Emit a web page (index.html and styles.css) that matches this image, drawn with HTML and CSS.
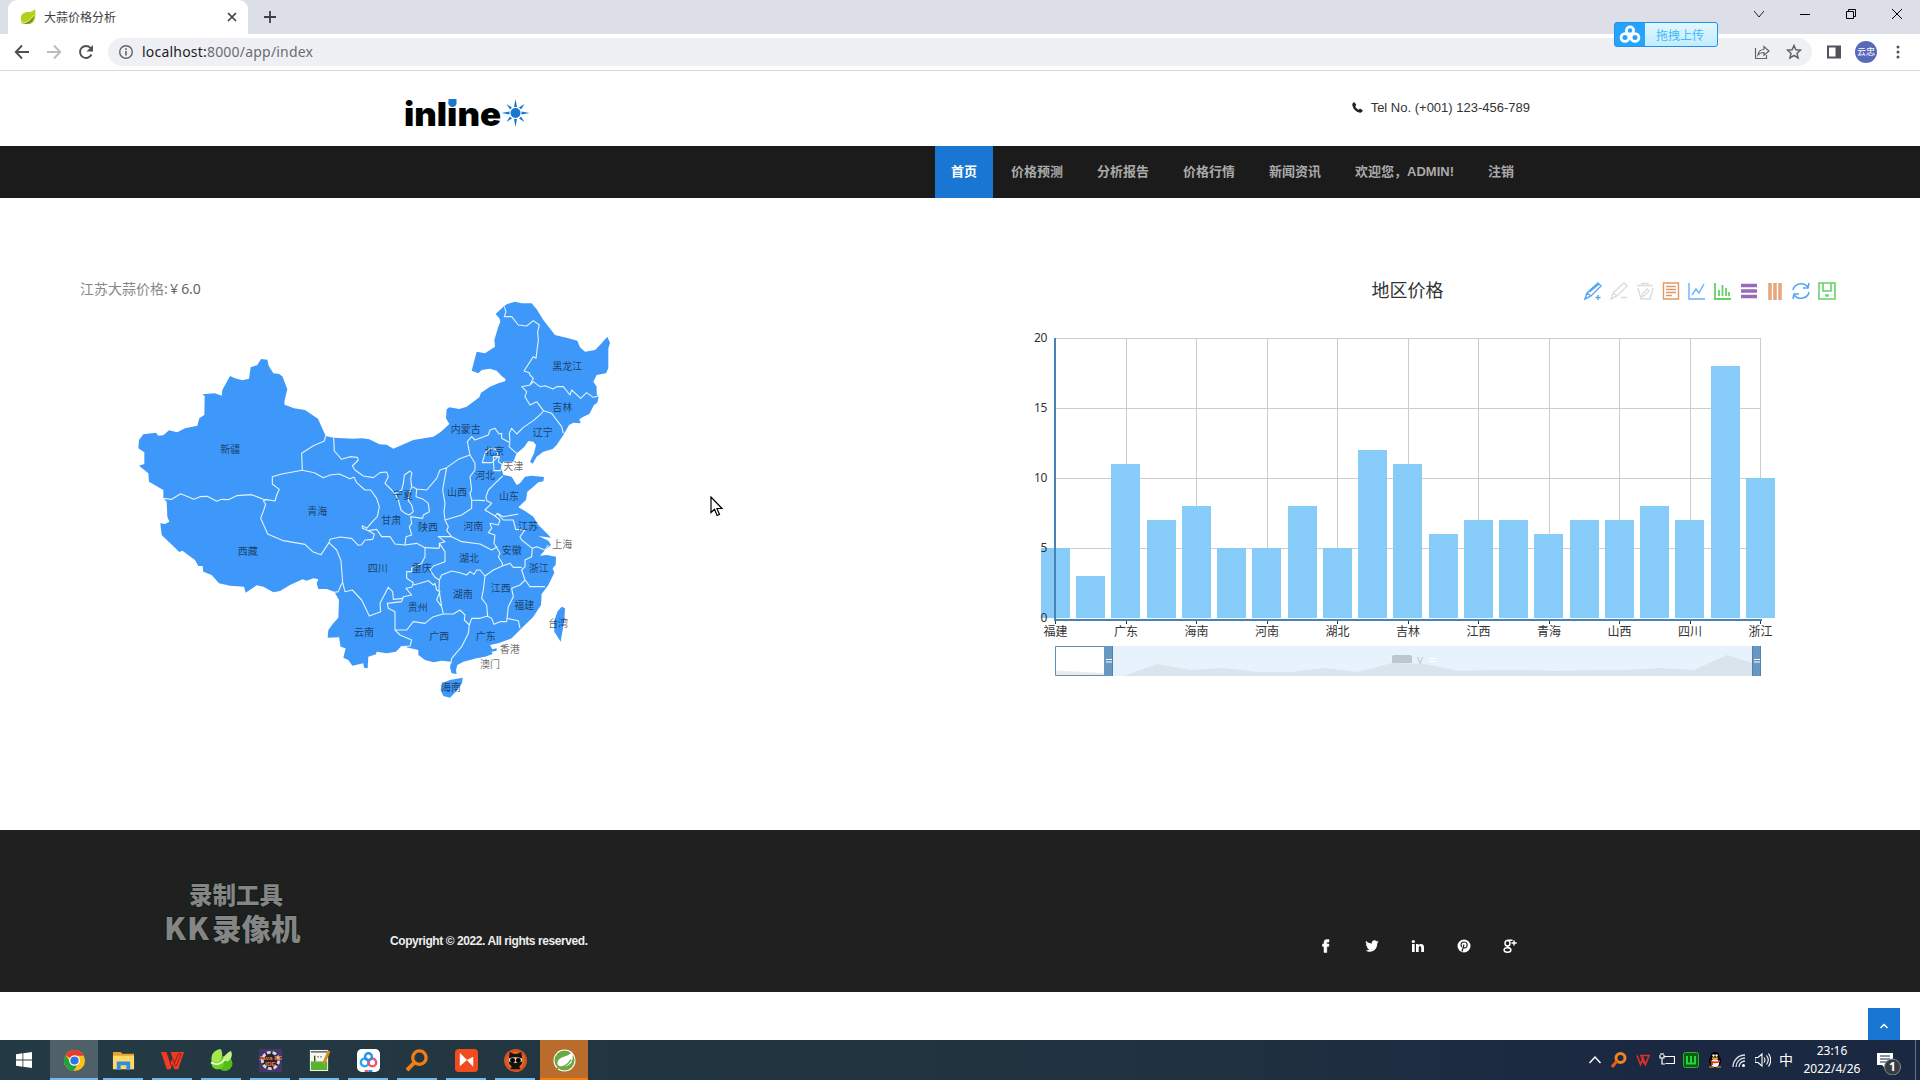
FILE: index.html
```
<!DOCTYPE html>
<html lang="zh-CN">
<head>
<meta charset="utf-8">
<title>大蒜价格分析</title>
<link rel="stylesheet" href="styles.css">
</head>
<body>
<div class="tabbar">
  <div class="tab">
    <svg width="18" height="18" viewBox="0 0 18 18"><path d="M16 1c1 7 1 14-6 15-3 .4-5-.4-6.500-.5C-1 8 4 4 9 4c4 0 5-1 7-3z" fill="#b5cf1f"/><path d="M2 15c7 0 10-3 13-8 0 6-3 9-8 9z" fill="#6e9a20"/><path d="M2 15c6 0 9-3 13-8" stroke="#e9f3a0" fill="none"/></svg>
    <span class="tab-title">大蒜价格分析</span>
    <svg width="12" height="12" viewBox="0 0 12 12"><path d="M2 2l8 8M10 2l-8 8" stroke="#3c4043" stroke-width="1.700"/></svg>
  </div>
  <svg class="newtab" width="14" height="14" viewBox="0 0 14 14"><path d="M7 1v12M1 7h12" stroke="#3c4043" stroke-width="1.800"/></svg>
  <div class="winctl">
    <svg width="12" height="12" viewBox="0 0 12 12"><path d="M1 3l5 6 5-6" fill="none" stroke="#222"/></svg>
    <svg width="12" height="12" viewBox="0 0 12 12"><path d="M1 6.500h10" stroke="#000"/></svg>
    <svg width="12" height="12" viewBox="0 0 12 12"><path d="M1.500 3.500h7v7h-7zM3.500 3.500v-2h7v7h-2" fill="none" stroke="#000"/></svg>
    <svg width="12" height="12" viewBox="0 0 12 12"><path d="M1 1l10 10M11 1L1 11" stroke="#000"/></svg>
  </div>
</div>
<div class="toolbar">
  <svg width="16" height="16" viewBox="0 0 16 16"><path d="M15 8H2M8 1.500L1.800 8 8 14.500" fill="none" stroke="#4d5156" stroke-width="1.900"/></svg>
  <svg width="16" height="16" viewBox="0 0 16 16"><path d="M1 8h13M8 1.500L14.200 8 8 14.500" fill="none" stroke="#babcbe" stroke-width="1.900"/></svg>
  <svg width="16" height="16" viewBox="0 0 16 16"><path d="M13.500 10.500A6 6 0 1 1 12.600 4" fill="none" stroke="#4d5156" stroke-width="1.900"/><path d="M15 1v6.500H8.500z" fill="#4d5156"/></svg>
  <div class="omnibox">
    <svg width="16" height="16" viewBox="0 0 16 16"><circle cx="8" cy="8" r="6.300" fill="none" stroke="#5f6368" stroke-width="1.400"/><path d="M8 7v4.500M8 4.200v1.700" stroke="#5f6368" stroke-width="1.600"/></svg>
    <svg class="url" width="180" height="22"><text x="0" y="16" textLength="171"><tspan fill="#202124">localhost:</tspan><tspan fill="#6a6d71">8000/app/index</tspan></text></svg>
    <svg width="16" height="16" viewBox="0 0 16 16"><path d="M1.500 4v10.500h11V11M4 11c.5-4 3-5.500 6-5.500V2.500L15 7l-5 4.300V8.500c-3 0-4.500.5-6 2.500z" fill="none" stroke="#5f6368" stroke-width="1.200"/></svg>
    <svg width="16" height="16" viewBox="0 0 16 16"><path d="M8 1.500l1.900 4.300 4.600.4-3.500 3.100 1.100 4.700L8 11.500 3.900 14 5 9.300 1.500 6.200l4.600-.4z" fill="none" stroke="#5f6368" stroke-width="1.500"/></svg>
  </div>
  <svg width="16" height="16" viewBox="0 0 16 16"><path d="M2 2.500h12v11H2z" fill="none" stroke="#50545a" stroke-width="2"/><path d="M9.500 2h5v12h-5z" fill="#50545a"/></svg>
  <div class="avatar">云忠</div>
  <svg width="16" height="16" viewBox="0 0 16 16" fill="#50545a"><circle cx="8" cy="3" r="1.500"/><circle cx="8" cy="8" r="1.500"/><circle cx="8" cy="13" r="1.500"/></svg>
</div>
<div class="upload">
  <svg width="30" height="24" viewBox="0 0 30 24" fill="none" stroke="#fff" stroke-width="2.800"><circle cx="15" cy="7.500" r="3.600"/><circle cx="10" cy="14.500" r="3.900"/><circle cx="20" cy="14.500" r="3.900"/></svg>
  <span>拖拽上传</span>
</div>

<header class="site-header">
  <svg class="logo" width="130" height="36" viewBox="0 0 130 36">
    <text x="0" y="27.500" textLength="97" lengthAdjust="spacingAndGlyphs">inline</text>
    <path d="M44.500 1h8v5q-1 3-4 3t-4-3z" fill="#1976d2"/>
    <g transform="translate(111.500 15)" fill="#1976d2"><circle r="5"/><path d="M-1.500-6L0-14l1.500 8zM-1.500 6L0 14l1.500-8zM6-1.500L14 0 6 1.500zM-6-1.500L-14 0l8 1.500zM3.500-5.500L9-9 5.500-3.500zM-3.500-5.500L-9-9l3.500 5.500zM3.500 5.500L9 9 5.500 3.500zM-3.500 5.500L-9 9l3.500-5.500z"/></g>
  </svg>
  <div class="tel">
    <svg width="11" height="11" viewBox="0 0 11 11"><path d="M2.500.3L4.300 3 3.200 4.200c.6 1.500 1.700 2.600 3.400 3.500L8 6.600l2.700 1.700C10.500 10 9.300 10.900 8 10.700 3.700 10 .6 6.500.3 2.500.3 1.300 1.200.5 2.500.3z" fill="#222"/></svg>
    <span>Tel No. (+001) 123-456-789</span>
  </div>
</header>
<nav class="site-nav">
  <a class="active">首页</a><a>价格预测</a><a>分析报告</a><a>价格行情</a><a>新闻资讯</a><a>欢迎您，ADMIN!</a><a>注销</a>
</nav>

<main class="content">
  <section class="map-panel">
    <p class="price">江苏大蒜价格: <span>¥ 6.0</span></p>
    <svg class="map" width="510" height="420" viewBox="0 0 1530 1260">
      <path class="land" d="M55 475L57 450 70 433 108 428 115 437 130 436 147 421 172 427 195 415 232 407 238 385 253 375 254 318 247 313 285 310 305 317 307 300 330 258 345 265 367 271 387 266 392 232 412 225 423 207 442 209 446 227 460 250 478 252 488 260 502 298 493 335 494 344 522 355 555 360 594 386 606 413 617 438 640 443 700 446 725 445 748 448 778 463 800 464 820 476 880 450 940 440 963 425 988 402 978 385 980 358 988 352 1018 357 1040 350 1060 335 1078 322 1083 308 1110 290 1135 280 1155 274 1157 268 1145 258 1130 242 1110 236 1085 240 1075 250 1055 242 1062 215 1070 185 1095 190 1125 170 1123 150 1135 110 1141 95 1138 85 1127 72 1150 50 1162 42 1185 35 1205 40 1235 40 1250 58 1270 90 1305 135 1345 145 1372 152 1380 172 1395 185 1425 180 1440 165 1462 140 1470 158 1465 175 1465 235 1458 250 1430 255 1420 275 1430 290 1430 312 1436 320 1432 338 1422 345 1408 372 1390 380 1378 388 1382 400 1360 398 1347 405 1330 435 1310 465 1298 477 1270 485 1250 500 1238 521 1230 515 1242 490 1248 465 1240 455 1225 453 1212 472 1190 490 1180 515 1150 515 1143 530 1150 555 1175 560 1190 585 1200 580 1215 560 1235 557 1272 561 1270 574 1255 577 1240 590 1222 605 1218 630 1195 652 1215 663 1240 680 1255 705 1280 730 1293 743 1255 738 1285 752 1293 765 1275 780 1260 797 1280 795 1308 800 1307 825 1298 835 1303 848 1285 885 1265 912 1263 945 1240 980 1205 1015 1175 1045 1135 1060 1110 1065 1117 1078 1130 1075 1130 1082 1115 1085 1118 1092 1095 1100 1070 1105 1030 1115 1012 1125 1008 1140 1010 1152 995 1150 990 1132 993 1115 965 1112 940 1117 915 1110 895 1095 895 1080 865 1073 845 1067 828 1085 800 1090 770 1085 768 1093 745 1100 743 1135 732 1133 730 1120 697 1127 685 1110 670 1103 677 1075 662 1070 657 1042 623 1043 625 1020 640 1000 655 983 657 930 643 905 620 897 595 897 590 880 595 868 580 865 560 872 548 868 510 885 480 903 460 907 430 890 410 886 377 908 372 890 330 887 297 880 275 855 250 845 248 828 235 828 225 810 187 782 178 786 125 735 121 700 135 702 148 695 142 680 140 635 130 625 130 600 87 575 85 550 57 527 73 522 73 487z"/>
      <path class="land" d="M990 1170l38-7-2 17-14 20-22 23-20-5-8-18 3-20zM1325 950l10 5-2 35-11 65-19-30-1-30 10-30z"/>
      <path class="border" d="M130 625L155 628 182 611 222 628 240 620 262 619 290 634 305 628 325 629 350 617 395 614 430 628 440 629 465 633 470 615 478 598 457 582 457 560 485 552 547 541 545 490 580 467 613 453 617 438M440 629L430 633 437 642 433 655 422 685 443 732 490 752 555 763 578 785 603 794 627 758M547 541L583 548 610 563 630 555 658 552 690 566 702 562 710 578 735 600 752 600 770 625 778 650 772 680 760 692 740 715 727 707 727 715 745 722 763 733 758 748 735 750 725 764 715 766 695 745 660 741 630 748 627 758 650 780 663 812 668 878 663 885 655 905 643 907M641 443L643 483 665 508 690 500 712 502 715 510 697 528 705 540 730 558 760 563 780 548 800 546 805 560 795 580 815 600 825 612M668 878L675 905 697 900 725 930 748 978 770 970 782 965 780 940 805 892 818 905 820 928 850 925M745 722L770 718 785 740 810 740 825 762 855 765 890 760 915 773 958 775"/>
      <path class="border" transform="translate(750)" d="M120 543L103 555 100 580 95 600 75 610 85 630 93 660 105 670 118 675 130 665 125 645 115 632 118 610 125 590 122 565 126 550zM127 590L140 597 138 620 160 628 175 640 178 665 160 675 158 685 122 680 125 700 118 710 125 735 108 740 105 765M140 597L170 600 200 565 210 540 230 533 265 508 300 495 292 455 305 440 315 450 355 435 360 420 375 415 387 432 395 430 395 445 420 458 417 470 440 490M230 533L225 560 218 600 225 640 222 665 225 690 275 675 305 655 305 630 345 632M300 495L315 520 315 540 300 560 305 600 300 610 305 630M420 455L418 430 425 415 440 432 460 412 490 392 515 370 520 362 500 335 480 345 465 320 470 305 455 290 480 285 490 275 510 290 525 287 550 297 560 290 580 290 600 315 605 300 632 325 650 308 670 322 686 318M480 285L490 265 480 255 478 248 462 243 490 200 498 205 505 150 503 125 508 105 490 92 470 108 445 105 425 80 403 80 408 65 403 50M520 362L545 370 575 410 580 430M345 490L360 475 378 478 385 500 365 518 337 518zM370 500L388 500 385 515 398 525 392 542 372 542zM398 558L375 580 355 600 348 620 350 632 365 640 345 660 375 678 382 670 400 680 445 672M225 690L235 710 230 722 245 740 205 740 225 755 208 760 208 775M245 740L275 755 330 762 365 780 382 770M375 678L390 690 385 705 360 700 365 715 355 728 375 735 372 760 390 790 385 800 397 820 397 828 370 840 345 858M382 670L400 690 430 690 437 718 465 720 450 740 455 750 487 775 500 770 525 780 535 765M487 775L485 800 465 810 465 830 455 840 465 870 480 890 525 890M397 828L420 820 430 832 455 832M465 870L450 885 425 895 430 920 415 950 410 995M165 773L165 800 155 820 125 835 125 845 110 845 110 865 130 878 125 892 108 895 125 915 100 920 95 935 52 940 55 955 75 965 75 1020 90 1035 125 1050 120 1068 100 1070M130 885L150 880 175 872 190 885 195 880 200 900 210 905 200 930 215 950 220 972 190 980 165 1000 130 995 110 1020 75 1020M208 760L225 785 225 815 190 828 180 840 195 862 208 870 207 900 215 950M208 870L215 855 245 843 270 848 290 855 300 845 312 853 320 840 330 840 345 858 340 900 335 925 350 945 353 978 330 985 305 985 298 1005 283 990 285 975 270 960 250 972 220 972M298 1005L295 1030 275 1070 245 1105 243 1120M350 978L365 985 372 1003 390 995 410 995M410 985L445 992 450 1015"/>
      <g class="map-labels">
        <text x="331" y="490">新疆</text><text x="592" y="675">青海</text><text x="383" y="796">西藏</text><text x="773" y="846">四川</text><text x="732" y="1038">云南</text>
        <text x="1342" y="240">黑龙江</text><text x="1327" y="363">吉林</text><text x="1268" y="438">辽宁</text><text x="1037" y="429">内蒙古</text><text x="1123" y="496">北京</text><text x="1180" y="540">天津</text><text x="1095" y="567">河北</text><text x="1011" y="618">山西</text><text x="1167" y="630">山东</text><text x="849" y="627">宁夏</text><text x="814" y="703">甘肃</text><text x="924" y="724">陕西</text><text x="1060" y="720">河南</text><text x="1224" y="720">江苏</text><text x="1327" y="775">上海</text><text x="1175" y="792">安徽</text><text x="1047" y="816">湖北</text><text x="905" y="846">重庆</text><text x="1256" y="845">浙江</text><text x="1142" y="905">江西</text><text x="1028" y="924">湖南</text><text x="1213" y="957">福建</text><text x="893" y="963">贵州</text><text x="958" y="1050">广西</text><text x="1097" y="1050">广东</text><text x="1315" y="1010">台湾</text><text x="1169" y="1090">香港</text><text x="1110" y="1134">澳门</text><text x="993" y="1203">海南</text>
      </g>
    </svg>
  </section>
  <section class="chart-panel">
    <svg class="chart" width="960" height="420" viewBox="960 270 960 420">
      <text class="chart-title" x="1407.500" y="297">地区价格</text>
      <g class="tools">
        <g transform="translate(1584 282)" stroke="#1e90ff"><path d="M1 17l2-6L14 1l3 3L7 14zM3 11l4 3M5.500 10L15 2M14 13v5M11.500 15.500h5" stroke="#0a7cf0"/></g>
        <g transform="translate(1610 282)" stroke="#ccc"><path d="M1 17l2-6L14 1l3 3L7 14zM3 11l4 3M11 15.500h6"/></g>
        <g transform="translate(1636 282)" stroke="#ccc"><path d="M1 3.500h16M6 3V1.500h6V3M2 6l3 11h9l3-11M6 15l1-4 4-4 2 2-4 4z"/></g>
        <g transform="translate(1662 282)" stroke="#d2691e"><path d="M1.500 1h15v16h-15zM4 4.500h10M4 7.500h10M4 10.500h10M4 13.500h6"/></g>
        <g transform="translate(1688 282)" stroke="#1e90ff"><path d="M1 1v16h16M4 13l4-6 3 4 5-9"/></g>
        <g transform="translate(1714 282)" stroke="#22bb22"><path d="M1 1v16h16M5 14V8M8.500 14V3M12 14V6M15 14v-4" stroke-width="1.800"/></g>
        <g transform="translate(1740 282)" stroke="#4b0082"><path d="M1 3.500h16M1 9h16M1 14.500h16" stroke-width="3.600" stroke-opacity=".85"/></g>
        <g transform="translate(1766 282)" stroke="#d2691e"><path d="M4 1v17M9 1v17M14 1v17" stroke-width="3.600" stroke-opacity=".85"/></g>
        <g transform="translate(1792 282)" stroke="#0a7cf0"><path d="M1 8c1-6 10-9 15-3M17 1l-1 5h-5M17 10c-1 6-10 9-15 3M1 17l1-5h5" stroke-width="1.600"/></g>
        <g transform="translate(1818 282)" stroke="#22bb22"><path d="M1 1h16v16H1zM5 1v8h8V1M8 13h2v1H8z" stroke-width="1.600"/></g>
      </g>
      <path class="grid" d="M1056 338.500h705M1056 408.500h705M1056 478.500h705M1056 548.500h705M1126.500 338v280M1196.500 338v280M1267.500 338v280M1337.500 338v280M1408.500 338v280M1478.500 338v280M1549.500 338v280M1619.500 338v280M1690.500 338v280M1760.500 338v280"/>
      <path class="axis" d="M1055 338v281M1054 620h708"/>
      <path class="ticks" d="M1055.500 621v3M1126.500 621v3M1196.500 621v3M1267.500 621v3M1337.500 621v3M1408.500 621v3M1478.500 621v3M1549.500 621v3M1619.500 621v3M1690.500 621v3M1760.500 621v3"/>
      <path class="bars" d="M1041 618v-70h29v70zM1076 618v-42h29v42zM1111 618v-154h29v154zM1147 618v-98h29v98zM1182 618v-112h29v112zM1217 618v-70h29v70zM1252 618v-70h29v70zM1288 618v-112h29v112zM1323 618v-70h29v70zM1358 618v-168h29v168zM1393 618v-154h29v154zM1429 618v-84h29v84zM1464 618v-98h29v98zM1499 618v-98h29v98zM1534 618v-84h29v84zM1570 618v-98h29v98zM1605 618v-98h29v98zM1640 618v-112h29v112zM1675 618v-98h29v98zM1711 618v-252h29v252zM1746 618v-140h29v140z"/>
      <path d="M1055 547v73" stroke="#4682b4" stroke-width="2"/>
      <g class="ylabels"><text x="1047" y="342">20</text><text x="1047" y="412">15</text><text x="1047" y="482">10</text><text x="1047" y="552">5</text><text x="1047" y="622">0</text></g>
      <g class="xlabels"><text x="1055.500" y="636">福建</text><text x="1126" y="636">广东</text><text x="1196.500" y="636">海南</text><text x="1267" y="636">河南</text><text x="1337.500" y="636">湖北</text><text x="1408" y="636">吉林</text><text x="1478.500" y="636">江西</text><text x="1549" y="636">青海</text><text x="1619.500" y="636">山西</text><text x="1690" y="636">四川</text><text x="1760.500" y="636">浙江</text></g>
      <path d="M1113 646h639v30h-639z" fill="#e7f2fc"/>
      <path d="M1392 663v-6q0-2 2-2h16q2 0 2 2v6z" fill="#bdc7d2"/>
      <text x="1417" y="664" class="legend">v</text>
      <path d="M1429 658.500h7M1429 661.500h7" stroke="#fff"/>
      <path d="M1124 676L1157 664 1190 670 1224 668 1257 672 1291 672 1324 668 1358 672 1392 663 1425 664 1459 671 1492 670 1526 670 1559 671 1593 670 1627 670 1660 668 1694 670 1727 655 1752 663V676z" fill="#dae4ec"/>
      <path d="M1056 670.500L1104 673v3h-48z" fill="#ebebeb"/>
      <path d="M1055.500 646.500h57v29h-57z" fill="none" stroke="#5c8eb8"/>
      <path d="M1104 646h9v30h-9zM1752 646h9v30h-9z" fill="#6897c1"/><path d="M1112.500 646v30M1752.500 646v30M1760.500 646v30" stroke="#4f82ae"/>
      <path d="M1106 659.500h6M1106 662h6M1754 659.500h6M1754 662h6" stroke="#fff"/>
    </svg>
  </section>
</main>

<footer class="site-footer">
  <svg class="copyright" width="210" height="20"><text x="0" y="14" textLength="198">Copyright © 2022. All rights reserved.</text></svg>
  <div class="social">
    <svg width="14" height="14" viewBox="0 0 14 14"><path d="M5 13.500V7.500H3.500V5H5V3.500C5 1.500 6 .5 8 .5h2V3H8.700C8 3 7.800 3.300 7.800 4v1H10l-.3 2.500H7.800v6z" stroke="#fff" stroke-width=".5"/></svg>
    <svg width="14" height="14" viewBox="0 0 14 14"><path d="M1 1.800c1.500 1.800 3.500 2.700 5.800 2.800C6.500 2.500 8 1.300 9.500 1.300c.8 0 1.500.3 2 .9l1.700-.7-1 1.600 1.500-.4-1.400 1.500C12.300 9 9.500 12.700 5 12.700c-1.700 0-3.100-.5-4.400-1.300 1.500 0 2.700-.3 3.900-1.200-1.300-.1-2.100-.8-2.600-2H3C1.700 7.700.9 6.700.9 5.300l1.200.3C.9 4.500.4 3.200 1 1.800z"/></svg>
    <svg width="14" height="14" viewBox="0 0 14 14"><path d="M1 5h2.700v8H1zM5 5h2.600v1.200C9 4.200 13 4.300 13 8v5h-2.800V8.700c0-2-2.500-1.900-2.500 0V13H5z"/><circle cx="2.300" cy="2.500" r="1.600"/></svg>
    <svg width="14" height="14" viewBox="0 0 14 14"><circle cx="7" cy="7" r="6.500"/><path d="M5 12.500L7 5.500M4.600 8C3 4.500 5 3 7.200 3c3.300 0 3.600 3.300 2.200 5.100-1 1.200-2.500 1-3 .3" fill="none" stroke="#202020" stroke-width="1.200"/></svg>
    <svg width="14" height="14" viewBox="0 0 14 14"><g fill="none" stroke="#fff" stroke-width="1.500"><ellipse cx="4.500" cy="4.200" rx="2.500" ry="2.800"/><ellipse cx="4.500" cy="11" rx="3.400" ry="2.200"/><path d="M4.500 1.300h5M4 7l2.500 2.500M11 1.500v5M8.500 4h5.200"/></g></svg>
  </div>
  <div class="watermark"><div class="wm-small">录制工具</div><div class="wm-big"><span>KK</span><span>录像机</span></div></div>
</footer>
<div class="page-end"><a class="totop"><svg width="10" height="8" viewBox="0 0 10 8"><path d="M1.500 6L5 2.500 8.500 6" fill="none" stroke="#fff" stroke-width="1.500"/></svg></a></div>

<div class="taskbar">
  <div class="start"><svg width="16" height="16" viewBox="0 0 16 16"><path d="M0 2.200L6.500 1.300V7.600H0zM7.300 1.200L16 0V7.600H7.300zM0 8.400H6.500V14.700L0 13.800zM7.300 8.400H16V16L7.300 14.800z" fill="#fff"/></svg></div>
  <div class="task current"><svg viewBox="0 0 24 24"><circle cx="12" cy="12" r="11" fill="#fbc116"/><path d="M12 12L2.500 6.500A11 11 0 0 1 21.500 6.500L22 7H12z" fill="#e33b2e"/><path d="M2.500 6.500A11 11 0 0 0 11 23l5-8.500-8-.5z" fill="#269f42"/><circle cx="12" cy="12" r="5.600" fill="#fff"/><circle cx="12" cy="12" r="4.300" fill="#2f73e8"/></svg></div>
  <div class="task"><svg viewBox="0 0 24 24"><path d="M1 3h8l2 2h12v16H1z" fill="#e2a52b"/><path d="M1 7h22v14H1z" fill="#ffd869"/><path d="M5 13h14v9h-4v-5H9v5H5z" fill="#2d8fdd"/></svg></div>
  <div class="task"><svg viewBox="0 0 24 24"><path d="M0 3h6l4 12 2-6-2-6h14l-6 18h-4l-2-5-2 5H6z" fill="#f03c24"/><path d="M6 3l5 15M14 15L18 5h3l-5 13M12 9l3 9" fill="none" stroke="#8e1d14" stroke-width="1"/></svg></div>
  <div class="task"><svg viewBox="0 0 24 24"><circle cx="15.500" cy="15" r="8" fill="#53bd17"/><circle cx="8" cy="15" r="6.500" fill="#6fd028"/><path d="M2 14C0 6 4 1 11 0c3 4 2 10-2 14z" fill="#a5e84e"/><path d="M13 11c2-5 6-8 9-9 2 5 0 9-4 11z" fill="#c5f28a"/><path d="M1 14c5 3 11 2 14-3" fill="none" stroke="#effbd4" stroke-width="1.800"/></svg></div>
  <div class="task"><svg viewBox="0 0 24 24"><path d="M0 0h24v24H0z" fill="#45366c"/><circle cx="12" cy="12" r="8.500" fill="#252131" stroke="#d7d5de" stroke-width="3" stroke-dasharray="4 2"/><text x="12" y="11" class="ee">Java EE</text><text x="12" y="18" class="ee">IDE</text></svg></div>
  <div class="task"><svg viewBox="0 0 24 24"><path d="M2 1h19v22H2z" fill="#f5f7ed"/><path d="M3 13h17v9H3z" fill="#58b331"/><path d="M3 3h17M7 7v6M10 8h1M13 8h1" stroke="#444" stroke-width="1.500"/><path d="M22 2l-6 14" stroke="#d18e25" stroke-width="3"/></svg></div>
  <div class="task"><svg viewBox="0 0 24 24"><rect width="24" height="24" rx="5" fill="#fff"/><g fill="none" stroke-width="2.500"><circle cx="8" cy="14" r="4" stroke="#25a8ee"/><circle cx="16" cy="14" r="4" stroke="#ed5265"/><circle cx="12" cy="8" r="3.600" stroke="#258fe9"/></g><path d="M8 22h4v2H8z" fill="#ed5265"/><path d="M12 22h4v2h-4z" fill="#2685ee"/></svg></div>
  <div class="task"><svg viewBox="0 0 24 24"><circle cx="14" cy="9" r="7" fill="none" stroke="#f57c14" stroke-width="3.500"/><path d="M9 14l-8 8" stroke="#f57c14" stroke-width="4"/></svg></div>
  <div class="task"><svg viewBox="0 0 24 24"><rect width="24" height="24" rx="4" fill="#f24b20"/><path d="M5 4v14l7.500-6.500zM5 4l14 14.500V8l-6.500 3.500z" fill="#fff"/></svg></div>
  <div class="task"><svg viewBox="0 0 24 24"><circle cx="12" cy="12" r="12" fill="#d9511e"/><circle cx="12" cy="12" r="9" fill="#e8752e"/><path d="M5 10l1-7 4 2h4l4-2 1 7q1 6-3 8l1 3H7l1-3q-4-2-3-8z" fill="#17120f"/><path d="M5 10q7-3 14 0v3q-7 3-14 0z" fill="#f3d0ae"/><circle cx="9" cy="12" r="2.600"/><circle cx="15" cy="12" r="2.600"/></svg></div>
  <div class="task spring"><svg viewBox="0 0 24 24"><circle cx="12" cy="12" r="11.500" fill="#fff"/><circle cx="12" cy="12" r="10.500" fill="#6aaa45"/><path d="M20 3c2 9-1 16-11 15-4 0-5-2-4-5C7 7 15 9 20 3z" fill="#fff"/><path d="M4 20q10-1 15-9" fill="none" stroke="#6aaa45" stroke-width="1.500"/></svg></div>
  <div class="tray">
    <svg viewBox="0 0 16 16"><path d="M2.500 11L8 5l5.500 6" fill="none" stroke="#fff" stroke-width="1.400"/></svg>
    <svg viewBox="0 0 16 16"><circle cx="9.500" cy="6" r="4.500" fill="none" stroke="#f58220" stroke-width="3"/><path d="M6 9l-5 6" stroke="#e65d10" stroke-width="3"/></svg>
    <svg viewBox="0 0 16 16"><path d="M2 3.500l3.500 9L8 6l2.500 6.500 3.500-9H6l3.500 9" fill="none" stroke="#dc302b" stroke-width="1.600"/></svg>
    <svg viewBox="0 0 16 16"><path d="M5.500 4.500h10v7h-9M1 3v3h4V3M2 3V1M4 3V1M3 6v6h3" fill="none" stroke="#fff" stroke-width="1.200"/></svg>
    <svg viewBox="0 0 16 16"><rect x=".5" y=".5" width="15" height="15" rx="2" fill="#075f10" stroke="#2fae3a"/><path d="M4 4v7.500h8V4M8 4v7" fill="none" stroke="#2fd040" stroke-width="2"/></svg>
    <svg viewBox="0 0 16 16"><ellipse cx="8" cy="9" rx="6" ry="6.500"/><ellipse cx="8" cy="5" rx="4.500" ry="5"/><ellipse cx="8" cy="11" rx="4" ry="4" fill="#fff"/><circle cx="6.500" cy="3.500" r="1.200" fill="#fff"/><circle cx="9.500" cy="3.500" r="1.200" fill="#fff"/><path d="M5 6h6l-3 2zM2 15h5M9 15h5" fill="#f0a31c" stroke="#f0a31c"/><path d="M3 8q5 3 10 0v2q-4 2-7 1v2H4v-3z" fill="#e52c2c"/></svg>
    <svg viewBox="0 0 16 16"><path d="M2 15A12 12 0 0 1 14 3M5 15a9 9 0 0 1 9-9M8 15a6 6 0 0 1 6-6" fill="none" stroke="#dfe3e9" stroke-width="1.300"/><circle cx="12.500" cy="13.500" r="1.500" fill="#fff"/></svg>
    <svg viewBox="0 0 16 16"><path d="M0 5.500h3l4-3.500v12l-4-3.500H0zM9 5.500q2 2.500 0 5M11.500 3.500q3.500 4.500 0 9M13.500 1.500q4.500 6.500 0 13" fill="none" stroke="#fff" stroke-width="1.100"/></svg>
    <span class="ime">中</span>
  </div>
  <div class="clock"><span>23:16</span><span>2022/4/26</span></div>
  <svg class="notice" width="28" height="28" viewBox="0 0 28 28"><path d="M3 6h16v12h-8v3l-3-3H3z" fill="#fff"/><path d="M6 9h10M6 12h10M6 15h7" stroke="#1b2842"/><circle cx="18.500" cy="20" r="8" fill="#383c42" stroke="#858991"/><text x="18.500" y="24">1</text></svg>
  <div class="desktop-edge"></div>
</div>
<svg class="cursor" width="14" height="22" viewBox="0 0 14 22"><path d="M1 1v15.500l3.500-3.300 2.600 6.300 2.400-1-2.600-6H12z" fill="#fff" stroke="#000" stroke-width="1.200"/></svg>
</body>
</html>
```
FILE: styles.css
```
* { box-sizing: border-box; }
body { margin: 0; width: 1920px; height: 1080px; overflow: hidden; background: #fff; position: relative; display: flex; flex-direction: column; font-family: "Liberation Sans", "Noto Sans CJK SC", sans-serif; }
svg { display: block; flex: none; }

.tabbar { height: 34px; background: #dcdfe7; display: flex; align-items: center; padding-left: 8px; }
.tab { width: 240px; height: 34px; background: #fff; border-radius: 9px 9px 0 0; display: flex; align-items: center; padding: 0 10px 0 11px; gap: 7px; }
.tab-title { flex: 1; font: 12px/16px "Noto Sans CJK SC", sans-serif; color: #3c4043; padding-bottom: 1px; }
.newtab { margin-left: 15px; }
.winctl { margin-left: auto; display: flex; gap: 34px; padding: 0 17px 6px 0; }

.toolbar { height: 37px; border-bottom: 1px solid #d6d8da; display: flex; align-items: center; padding: 0 14px; gap: 16px; }
.toolbar > svg:nth-child(3) { margin-right: -2px; }
.omnibox { flex: 1; height: 28px; border-radius: 14px; background: #eff0f4; display: flex; align-items: center; padding: 0 10px; gap: 16px; }
.omnibox .url { margin: 0 auto 0 -8px; }
.url text { font: 14px "Noto Sans", sans-serif; }
.omnibox + svg { margin-left: -2px; }
.avatar { width: 22px; height: 22px; margin: 0 -3px; border-radius: 50%; background: #5969b9; color: #fff; font: 9px/22px "Noto Sans CJK SC", sans-serif; text-align: center; white-space: nowrap; }

.upload { position: absolute; left: 1614px; top: 22px; width: 104px; height: 25px; display: flex; align-items: center; border: 1px solid #2490e8; border-radius: 3px; background: #24a4ff; overflow: hidden; }
.upload span { flex: 1; height: 23px; padding-right: 2px; background: linear-gradient(#e2f6ff, #c2ecff); color: #45b9f5; text-align: center; font: 12px/23px "Noto Sans CJK SC", sans-serif; }

.site-header { height: 75px; display: flex; justify-content: space-between; padding: 27px 390px 0 404px; }
.logo { overflow: visible; }
.logo text { font: 900 33px Inter, Roboto, sans-serif; fill: #000; }
.tel { display: flex; align-items: center; gap: 8px; height: 18px; font-size: 13px; color: #333; white-space: nowrap; }

.site-nav { height: 52px; background: #1b1b1b; display: flex; padding-left: 935px; }
.site-nav a { padding: 0 17px; color: #aaa; font: bold 13px/51px "Liberation Sans", "Noto Sans CJK SC", sans-serif; white-space: nowrap; }
.site-nav .active { background: #1976d2; color: #fff; padding: 0 16px; margin-right: 1px; }

.content { height: 632px; display: grid; grid-template-columns: 960px 960px; }
.map-panel { padding: 80px 0 0 80px; }
.price { margin: 0; height: 12px; font: 14px/20px "Noto Sans CJK SC", sans-serif; color: #888; }
.price span { margin-left: -1px; font-family: "Noto Sans", sans-serif; letter-spacing: -.2px; color: #666; }
.map { margin-left: 40px; }
.land { fill: #3e98f9; }
.border { fill: none; stroke: #e4f4f4; stroke-width: 3.3; stroke-linejoin: round; }
.map-labels text { font: 30px "Noto Sans CJK SC", sans-serif; fill: #000; fill-opacity: .6; text-anchor: middle; }

.chart-panel { padding-top: 72px; }
.chart-title { font: 18px "Noto Sans CJK SC", sans-serif; fill: #333; text-anchor: middle; }
.tools { fill: none; stroke-width: 1.4; opacity: .68; }
.grid { stroke: #ccc; }
.axis { stroke: #4682b4; stroke-width: 2; }
.ticks { stroke: #333; }
.bars { fill: #87cbf9; }
.ylabels text { font: 12px "Noto Sans", sans-serif; letter-spacing: -.4px; fill: #333; text-anchor: end; }
.xlabels text { font: 12px "Noto Sans CJK SC", sans-serif; fill: #333; text-anchor: middle; }
.legend { font: 12px "Noto Sans", sans-serif; fill: #bfc9d2; }

.site-footer { position: relative; height: 162px; background: #202020; display: flex; justify-content: space-between; padding: 101px 403px 0 390px; }
.copyright text { font: bold 12px "Liberation Sans", sans-serif; fill: #eee; }
.social { display: flex; gap: 32px; padding-top: 8px; }
.social svg { fill: #fff; }
.watermark { position: absolute; left: 164px; top: 48px; width: 140px; color: #858585; font-family: "Noto Sans CJK SC", sans-serif; font-weight: 900; text-shadow: 0 0 2px #0d0d0d, 0 0 3px #0d0d0d, 0 0 4px #1d4a38; white-space: nowrap; }
.wm-small { font-size: 23.5px; line-height: 32px; padding-left: 25px; }
.wm-big { font-size: 29.5px; line-height: 34px; display: flex; gap: 3px; }
.wm-big span:first-child { width: 45px; font-size: 31px; letter-spacing: 1px; }

.page-end { height: 48px; display: flex; justify-content: flex-end; align-items: flex-end; padding-right: 20px; }
.totop { width: 32px; height: 32px; background: #1976d2; display: flex; align-items: center; justify-content: center; padding-top: 3px; }

.taskbar { height: 40px; display: flex; gap: 1px; background: linear-gradient(90deg, #243a44 0, #20323f 60%, #1b2842 85%); color: #fff; }
.start { width: 48px; margin-right: 1px; display: flex; align-items: center; justify-content: center; }
.task { width: 48px; display: flex; align-items: center; justify-content: center; background: linear-gradient(#76b9ed, #76b9ed) 4px 100% / 40px 2px no-repeat; }
.task svg { width: 23px; height: 23px; }
.task.current { background: linear-gradient(#76b9ed, #76b9ed) 0 100% / 48px 2px no-repeat #506069; }
.task.spring { background: linear-gradient(#ff7b0c, #ff7b0c) 0 100% / 48px 2px no-repeat #b96c2c; }
.ee { font: bold 6.5px "Liberation Sans", sans-serif; fill: #f27c35; text-anchor: middle; }
.tray { margin-left: auto; display: flex; align-items: center; gap: 8px; }
.tray svg { width: 16px; height: 16px; }
.ime { font: 14px/18px "Noto Sans CJK SC", sans-serif; padding-bottom: 2px; }
.clock { width: 72px; margin: 0 5px 0 2px; display: flex; flex-direction: column; align-items: center; font: 12px/18px "Noto Sans", sans-serif; padding-top: 2px; }
.notice { margin: 7px 12px 0 0; }
.notice text { font: bold 12px "Noto Sans", sans-serif; fill: #fff; text-anchor: middle; }
.desktop-edge { width: 5px; border-left: 1px solid #69748a; }

.cursor { position: absolute; left: 710px; top: 496px; }
```
